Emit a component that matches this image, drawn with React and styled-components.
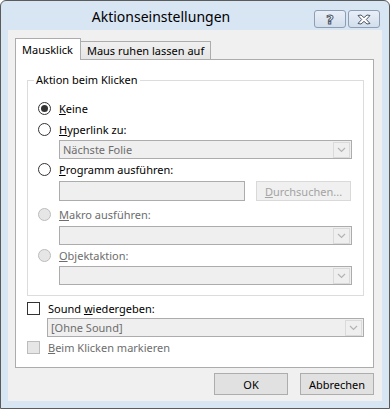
import React from "react";
import styled, { createGlobalStyle } from "styled-components";

const GlobalStyle = createGlobalStyle`
  html, body {
    margin: 0;
    padding: 0;
    background: #ffffff;
  }
  body {
    font-family: "Noto Sans", "Open Sans", sans-serif;
    font-size: 11px;
    color: #000;
  }
`;

const Window = styled.div`
  box-sizing: border-box;
  width: 390px;
  height: 409px;
  border: 1px solid #5b5b5b;
  border-radius: 6px 6px 0 0;
  background: #d8e5f3;
  display: flex;
  flex-direction: column;
  padding: 0 7px 7px 7px;
`;

const TitleBar = styled.div`
  height: 29px;
  display: flex;
  align-items: flex-start;
`;

const Title = styled.div`
  flex: 1;
  text-align: center;
  font-size: 14px;
  line-height: 20px;
  padding-top: 6px;
  color: #000;
`;

const Caps = styled.div`
  display: flex;
  gap: 2px;
  margin-top: 9px;
  margin-right: 2px;
`;

const CapButton = styled.div`
  box-sizing: border-box;
  width: 32px;
  height: 18px;
  border: 1px solid #8d9db3;
  border-radius: 3px;
  background: linear-gradient(#e9eff7, #d2deec);
  display: flex;
  align-items: center;
  justify-content: center;
  font-family: "DejaVu Sans", sans-serif;
  font-weight: bold;
  font-size: 13px;
  color: #fff;
  -webkit-text-stroke: 1px #4a5567;
`;

const Client = styled.div`
  flex: 1;
  background: #f0f0f0;
  display: flex;
  flex-direction: column;
  padding: 8px 8px 6px 7px;
`;

const Tabs = styled.div`
  display: flex;
  align-items: flex-end;
  height: 21px;
`;

const Tab = styled.div`
  box-sizing: border-box;
  position: relative;
  height: ${(p) => (p.active ? "22px" : "18px")};
  margin-bottom: ${(p) => (p.active ? "-1px" : "0")};
  margin-left: ${(p) => (p.active ? "0" : "-1px")};
  z-index: ${(p) => (p.active ? 1 : 0)};
  padding: ${(p) => (p.active ? "3px 7px 0 6px" : "1px 6px 0 6px")};
  background: ${(p) => (p.active ? "#fff" : "linear-gradient(#f0f0f0, #e5e5e5)")};
  border: 1px solid #acacac;
  border-bottom: none;
  line-height: 16px;
  white-space: nowrap;
`;

const Panel = styled.div`
  box-sizing: border-box;
  height: 309px;
  background: #fff;
  border: 1px solid #acacac;
  padding: 12px 9px 0 11px;
  display: flex;
  flex-direction: column;
`;

const Group = styled.fieldset`
  margin: 0;
  border: 1px solid #dcdcdc;
  padding: 10px 11px 10px 10px;
  display: flex;
  flex-direction: column;
`;

const Legend = styled.legend`
  padding: 0 2px;
  margin-left: -4px;
  line-height: 16px;
`;

const OptionRow = styled.label`
  display: flex;
  align-items: center;
  height: 20px;
  margin-top: ${(p) => p.gap || 0}px;
  color: ${(p) => (p.disabled ? "#6d6d6d" : "#000")};
  gap: 8px;
`;

const Radio = styled.span`
  box-sizing: border-box;
  width: 13px;
  height: 13px;
  border-radius: 50%;
  border: 1px solid ${(p) => (p.disabled ? "#bcbcbc" : "#333")};
  background: ${(p) => (p.disabled ? "#e6e6e6" : "#fff")};
  display: flex;
  align-items: center;
  justify-content: center;
  &::after {
    content: "";
    display: ${(p) => (p.checked ? "block" : "none")};
    width: 7px;
    height: 7px;
    border-radius: 50%;
    background: #333;
  }
`;

const Check = styled.span`
  box-sizing: border-box;
  width: 13px;
  height: 13px;
  border: 1px solid ${(p) => (p.disabled ? "#bcbcbc" : "#333")};
  background: ${(p) => (p.disabled ? "#e6e6e6" : "#fff")};
`;

const SelectBox = styled.div`
  box-sizing: border-box;
  height: 19px;
  margin-top: ${(p) => p.gap || 0}px;
  margin-left: ${(p) => p.indent}px;
  border: 1px solid #acacac;
  background: #efefef;
  color: #6d6d6d;
  display: flex;
  align-items: center;
  padding-left: 3px;
`;

const SelectText = styled.span`
  flex: 1;
  line-height: 16px;
`;

const ArrowBox = styled.span`
  box-sizing: border-box;
  width: 17px;
  height: 16px;
  margin-right: 1px;
  border: 1px solid #dadada;
  display: flex;
  align-items: center;
  justify-content: center;
`;

const FieldRow = styled.div`
  display: flex;
  align-items: center;
  margin-top: 1px;
  margin-left: 21px;
  gap: 11px;
`;

const TextField = styled.div`
  box-sizing: border-box;
  width: 186px;
  height: 20px;
  border: 1px solid #acacac;
  background: #efefef;
`;

const BrowseButton = styled.div`
  box-sizing: border-box;
  width: 95px;
  height: 20px;
  margin-top: 1px;
  border: 1px solid #d9d9d9;
  background: #f0f0f0;
  color: #a3a3a3;
  display: flex;
  align-items: center;
  justify-content: center;
`;

const Footer = styled.div`
  display: flex;
  justify-content: flex-end;
  gap: 12px;
  margin-top: 5px;
`;

const Button = styled.div`
  box-sizing: border-box;
  width: 74px;
  height: 22px;
  border: 1px solid #adadad;
  background: #e1e1e1;
  display: flex;
  align-items: center;
  justify-content: center;
`;

const Chevron = () => (
  <svg width="9" height="6" viewBox="0 0 9 6">
    <polyline points="1,1 4.5,4.5 8,1" fill="none" stroke="#b4b4b4" strokeWidth="1.2" />
  </svg>
);

const CloseGlyph = () => (
  <svg width="14" height="11" viewBox="0 0 14 11">
    <path
      d="M1 1.5 L4 1 L7 3.6 L10 1 L13 1.5 L9.3 5.5 L13 9.5 L10 10 L7 7.4 L4 10 L1 9.5 L4.7 5.5 Z"
      fill="#fff"
      stroke="#4a5567"
      strokeWidth="1"
      strokeLinejoin="round"
    />
  </svg>
);

const Select = ({ value, indent, gap }) => (
  <SelectBox indent={indent} gap={gap}>
    <SelectText>{value}</SelectText>
    <ArrowBox>
      <Chevron />
    </ArrowBox>
  </SelectBox>
);

const RadioOption = ({ checked, disabled, gap, accel, rest }) => (
  <OptionRow disabled={disabled} gap={gap}>
    <Radio checked={checked} disabled={disabled} />
    <span>
      <u>{accel}</u>
      {rest}
    </span>
  </OptionRow>
);

export default function App() {
  return (
    <>
      <GlobalStyle />
      <Window>
        <TitleBar>
          <Title>Aktionseinstellungen</Title>
          <Caps>
            <CapButton>?</CapButton>
            <CapButton>
              <CloseGlyph />
            </CapButton>
          </Caps>
        </TitleBar>
        <Client>
          <Tabs>
            <Tab active>Mausklick</Tab>
            <Tab>Maus ruhen lassen auf</Tab>
          </Tabs>
          <Panel>
            <Group>
              <Legend>Aktion beim Klicken</Legend>
              <RadioOption checked accel="K" rest="eine" />
              <RadioOption gap={1} accel="H" rest="yperlink zu:" />
              <Select value="Nächste Folie" indent={21} gap={1} />
              <RadioOption accel="P" rest="rogramm ausführen:" />
              <FieldRow>
                <TextField />
                <BrowseButton>
                  <span>
                    <u>D</u>urchsuchen...
                  </span>
                </BrowseButton>
              </FieldRow>
              <RadioOption disabled gap={3} accel="M" rest="akro ausführen:" />
              <Select value="" indent={21} gap={2} />
              <RadioOption disabled accel="O" rest="bjektaktion:" />
              <Select value="" indent={21} gap={1} />
            </Group>
            <OptionRow gap={2}>
              <Check />
              <span>
                Sound <u>w</u>iedergeben:
              </span>
            </OptionRow>
            <Select value="[Ohne Sound]" indent={20} />
            <OptionRow disabled>
              <Check disabled />
              <span>
                <u>B</u>eim Klicken markieren
              </span>
            </OptionRow>
          </Panel>
          <Footer>
            <Button>OK</Button>
            <Button>Abbrechen</Button>
          </Footer>
        </Client>
      </Window>
    </>
  );
}
